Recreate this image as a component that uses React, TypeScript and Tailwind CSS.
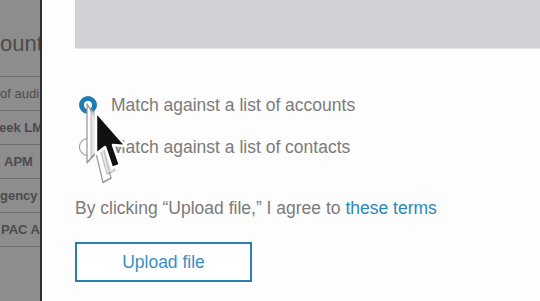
import React from "react";

const rows = [
  { text: "of audi", bold: false, offset: "ml-0" },
  { text: "eek LM", bold: true, offset: "-ml-px" },
  { text: "APM", bold: true, offset: "ml-[4px]" },
  { text: "gency I", bold: true, offset: "ml-0" },
  { text: "PAC Ag", bold: true, offset: "ml-px" },
];

function Cursor() {
  // pointer drawn with its tip at 0,0
  const arrow = "M0,0 L0,42 L9,35 L16,56 L24,53 L17,33 L30,34 Z";
  return (
    <svg className="absolute left-[76px] top-[90px]" width="64" height="104" viewBox="0 0 64 104">
      {/* motion trail */}
      <g transform="translate(11,14) scale(1,1.4)">
        <path d={arrow} fill="#ffffff" stroke="#9c9c9c" strokeWidth="1.3" strokeLinejoin="round" />
      </g>
      <g transform="translate(15,18) scale(1,1.18)" opacity="0.6">
        <path d={arrow} fill="#d6d6d6" stroke="#8a8a8a" strokeWidth="1" strokeLinejoin="round" />
      </g>
      <g transform="translate(20,22)">
        <path d={arrow} fill="#111111" stroke="#ffffff" strokeWidth="2.5" strokeLinejoin="round" />
      </g>
    </svg>
  );
}

export default function App() {
  return (
    <div className="relative flex h-[301px] w-[540px] overflow-hidden bg-[#fdfdfd] font-['Liberation_Sans',Arial,sans-serif]">
      {/* sidebar behind the modal */}
      <div className="w-[40px] shrink-0 overflow-hidden bg-[#8d8d8d] text-[#4b4b4b] whitespace-nowrap">
        <div className="flex h-[77px] items-center border-b border-[#6e6e6e] pt-[12px] text-[22px] leading-none">
          <span className="ml-0">ount</span>
        </div>
        {rows.map((r) => (
          <div
            key={r.text}
            className={`flex h-[34px] items-center border-b border-[#6e6e6e] text-[13px] ${r.bold ? "font-bold" : ""}`}
          >
            <span className={r.offset}>{r.text}</span>
          </div>
        ))}
      </div>
      <div className="w-[2px] shrink-0 bg-[#2e2e2e]" />

      {/* modal content */}
      <div className="flex-1 pl-[33px]">
        <div className="h-[49px] border-b border-[#e4e5e8] bg-[#d0d1d5]" />

        <div className="mt-[46px] flex flex-col gap-[22px] pl-[4px] text-[17.5px] leading-[20px] text-[#7b7b7b]">
          <label className="flex items-center gap-[14px]">
            <span className="h-[18px] w-[18px] rounded-full border-[5px] border-[#1c7db5] bg-white" />
            <span>Match against a list of accounts</span>
          </label>
          <label className="flex items-center gap-[14px]">
            <span className="h-[18px] w-[18px] rounded-full border border-[#8a8a8a] bg-white" />
            <span>Match against a list of contacts</span>
          </label>
        </div>

        <p className="mt-[41px] text-[17.5px] leading-[20px] text-[#7b7b7b]">
          By clicking “Upload file,” I agree to <span className="text-[#2b88b9]">these terms</span>
        </p>

        <button className="mt-[24px] flex h-[40px] w-[177px] items-center justify-center border-2 border-[#2c80b0] bg-white text-[17.5px] text-[#3a8fc2]">
          Upload file
        </button>
      </div>

      <Cursor />
    </div>
  );
}
